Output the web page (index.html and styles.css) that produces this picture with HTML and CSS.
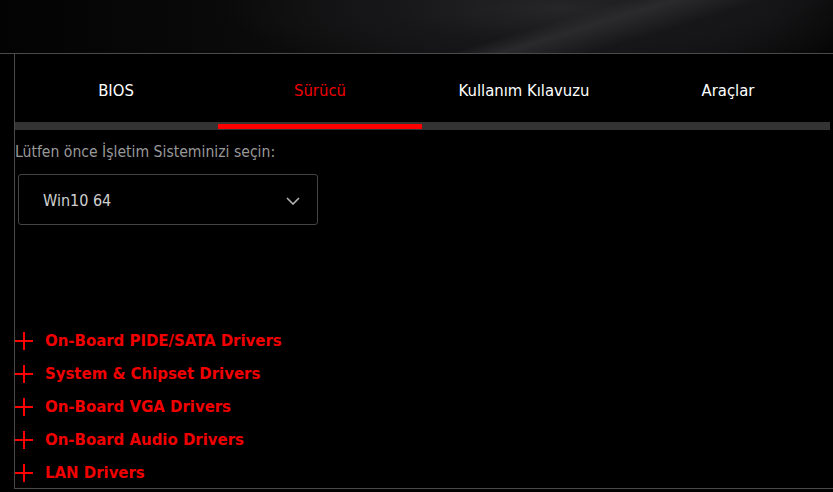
FILE: index.html
```html
<!DOCTYPE html>
<html lang="tr">
<head>
<meta charset="utf-8">
<title>Destek</title>
<link rel="stylesheet" href="styles.css">
</head>
<body>
<div class="hero"></div>
<div class="panel">
  <nav class="tabs">
    <div class="tab">BIOS</div>
    <div class="tab active">Sürücü</div>
    <div class="tab">Kullanım Kılavuzu</div>
    <div class="tab">Araçlar</div>
  </nav>
  <div class="tabbar"><div class="indicator"></div></div>
  <div class="label">Lütfen önce İşletim Sisteminizi seçin:</div>
  <div class="select">
    <span class="select-text">Win10 64</span>
    <svg class="chevron" width="14" height="8" viewBox="0 0 14 8"><path d="M1 1 L7 7 L13 1" fill="none" stroke="#b5b5b5" stroke-width="1.6"/></svg>
  </div>
  <ul class="drivers">
    <li><span class="plus"></span>On-Board PIDE/SATA Drivers</li>
    <li><span class="plus"></span>System &amp; Chipset Drivers</li>
    <li><span class="plus"></span>On-Board VGA Drivers</li>
    <li><span class="plus"></span>On-Board Audio Drivers</li>
    <li><span class="plus"></span>LAN Drivers</li>
  </ul>
</div>
</body>
</html>
```
FILE: styles.css
```css
html, body {
  margin: 0;
  padding: 0;
  background: #000;
  width: 833px;
  height: 492px;
  overflow: hidden;
  font-family: "DejaVu Sans Condensed", "DejaVu Sans", sans-serif;
}
.hero {
  height: 53px;
  border-bottom: 1px solid #4a4a4a;
  background:
    linear-gradient(163deg, transparent 0%, transparent 62%, rgba(44,44,46,0.9) 67%, rgba(22,22,24,0.7) 76%, transparent 86%),
    radial-gradient(ellipse 340px 70px at 560px 8px, #262628 0%, #171719 50%, rgba(10,10,10,0) 100%),
    linear-gradient(90deg, #030303 0%, #0a0a0a 30%, #141416 60%, #101012 85%, #050505 100%);
}
.panel {
  margin-left: 14px;
  border-left: 1px solid #4a4a4a;
  border-bottom: 1px solid #4a4a4a;
  box-sizing: border-box;
  height: 435px;
}
.tabs {
  display: grid;
  grid-template-columns: repeat(4, 204px);
  height: 68px;
  margin-left: -1px;
}
.tab {
  display: flex;
  align-items: center;
  justify-content: center;
  color: #fff;
  font-size: 16.5px;
  padding-top: 4px;
}
.tab.active { color: #f00000; }
.tabbar {
  width: 815px;
  height: 8px;
  background: #333;
  padding-top: 2px;
  box-sizing: border-box;
}
.indicator {
  width: 204px;
  height: 5px;
  margin-left: 203px;
  background: #f00;
}
.label {
  margin-top: 13px;
  color: #999;
  font-size: 15.6px;
  line-height: 19px;
  padding-left: 0;
}
.select {
  margin: 12px 0 0 3px;
  width: 300px;
  height: 51px;
  box-sizing: border-box;
  border: 1px solid #444;
  border-radius: 3px;
  display: flex;
  align-items: center;
  justify-content: space-between;
  padding: 2px 17px 0 24px;
}
.select-text {
  color: #d0d0d0;
  font-size: 16px;
  font-weight: normal;
}
.drivers {
  list-style: none;
  margin: 99px 0 0 0;
  padding: 0;
}
.drivers li {
  display: flex;
  align-items: center;
  height: 33px;
  color: #f00000;
  font-weight: bold;
  font-size: 16.6px;
}
.plus {
  width: 18px;
  height: 18px;
  margin-right: 12px;
  background:
    linear-gradient(#f00, #f00) center / 18px 2px no-repeat,
    linear-gradient(#f00, #f00) center / 2px 18px no-repeat;
}
```
